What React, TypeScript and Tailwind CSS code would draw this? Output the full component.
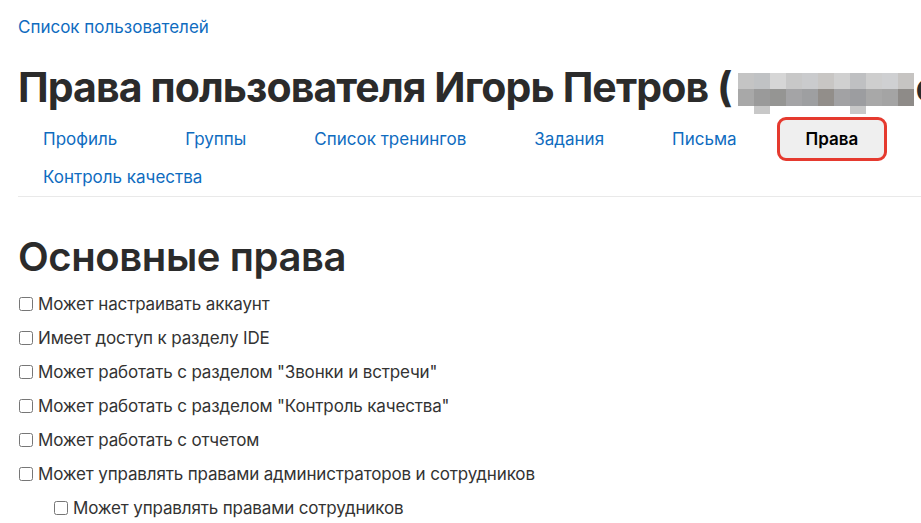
import React from "react";

const tabs = ["Профиль", "Группы", "Список тренингов", "Задания", "Письма"];

const perms: { label: string; sub?: boolean }[] = [
  { label: "Может настраивать аккаунт" },
  { label: "Имеет доступ к разделу IDE" },
  { label: 'Может работать с разделом "Звонки и встречи"' },
  { label: 'Может работать с разделом "Контроль качества"' },
  { label: "Может работать с отчетом" },
  { label: "Может управлять правами администраторов и сотрудников" },
  { label: "Может управлять правами сотрудников", sub: true },
];

const top = ["#c4c4c4", "#c0c2c4", "#d6d6d6", "#c8c8c8", "#cacbcd", "#c8c6c4", "#d0d0d0", "#bfc0c2", "#cecece", "#cfd0d2", "#c6c4c2"];
const bottom = ["#a8a8a8", "#9a9a9a", "#959593", "#a4a4a6", "#9e9fa1", "#928e8a", "#a2a2a4", "#9c9da0", "#a8a8a8", "#a4a4a4", "#8e8b88"];

// blurred e-mail in the title
const Pixelated = () => (
  <span className="relative ml-[6px] inline-block h-[33px] w-[178px] align-[-4px]">
    <span className="flex">
      {top.map((c, i) => (
        <span key={i} className="h-[16px] w-[16px]" style={{ background: c }} />
      ))}
    </span>
    <span className="flex">
      {bottom.map((c, i) => (
        <span key={i} className="h-[17px] w-[16px]" style={{ background: c }} />
      ))}
    </span>
    <span className="absolute left-[16px] top-[33px] h-[8px] w-[16px] bg-[#c8c8c8]" />
    <span className="absolute left-[112px] top-[33px] h-[8px] w-[16px] bg-[#c8c8c8]" />
  </span>
);

export default function App() {
  return (
    <div className="min-h-[523px] w-[921px] overflow-hidden bg-white font-['Inter','Liberation_Sans',sans-serif] text-[#333]">
      <div className="pl-[18px] pt-[16px]">
        <a className="block text-[17px] leading-[22px] text-[#0f6cbf]">Список пользователей</a>

        <h1 className="mt-[23px] whitespace-nowrap text-[41px] font-bold leading-[52px] tracking-[-0.9px] text-[#2b2b2b]">
          Права пользователя Игорь Петров (<Pixelated />e
        </h1>

        <nav className="mt-[7px] flex flex-wrap border-b border-[#e9e9e9] text-[17px] leading-[22px]">
          {tabs.map((t) => (
            <a key={t} className="mr-[18px] px-[25px] py-[8px] text-[#0f6cbf]">
              {t}
            </a>
          ))}
          <span className="rounded-[6px] bg-[#efefef] px-[26px] py-[8px] font-semibold text-black outline-[3px] outline-[#e53a2f] outline-solid">
            Права
          </span>
          <a className="px-[25px] py-[8px] text-[#0f6cbf]">Контроль качества</a>
        </nav>

        <h2 className="mt-[35px] text-[40px] font-semibold leading-[50px] tracking-[-0.4px] text-[#2b2b2b]">Основные права</h2>

        <div className="mt-[11px] flex flex-col gap-[12px] text-[17px] leading-[22px] tracking-[-0.15px]">
          {perms.map((p) => (
            <label key={p.label} className={`flex items-center gap-[5px] ${p.sub ? "pl-[36px]" : "pl-[1px]"}`}>
              <input type="checkbox" className="m-0 h-[14px] w-[14px]" />
              <span>{p.label}</span>
            </label>
          ))}
        </div>
      </div>
    </div>
  );
}
